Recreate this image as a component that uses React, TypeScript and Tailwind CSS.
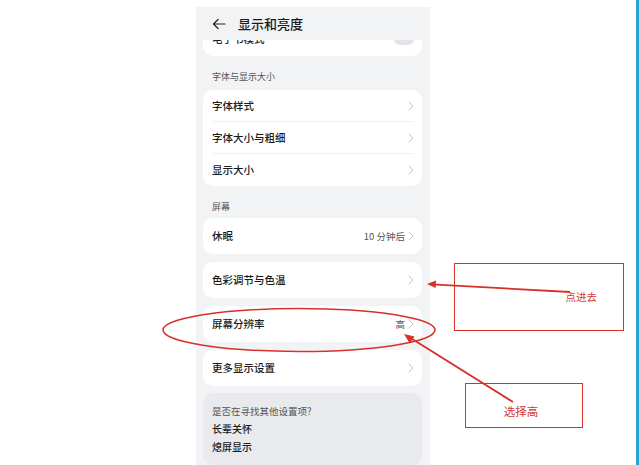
import type { ReactNode } from "react";

const font = { fontFamily: '"Noto Sans CJK SC", "Noto Sans", sans-serif' };

function Chevron() {
  return (
    <svg width="6" height="10" viewBox="0 0 6 10" className="shrink-0">
      <polyline
        points="1,1 5,5 1,9"
        fill="none"
        stroke="#c4c6ca"
        strokeWidth="1"
        strokeLinecap="round"
        strokeLinejoin="round"
      />
    </svg>
  );
}

function Row({ label, value, divider }: { label: string; value?: string; divider?: boolean }) {
  return (
    <div className="relative flex h-[32px] items-center justify-between pl-[9px] pr-[8px]">
      <span className="text-[10.5px] font-medium text-[#1b1b1b]">{label}</span>
      <div className="flex items-center gap-[3px]">
        {value && <span className="text-[9.5px] text-[#555]">{value}</span>}
        <Chevron />
      </div>
      {divider && <div className="absolute bottom-0 left-[9px] right-[8px] h-px bg-[#eef0f2]" />}
    </div>
  );
}

function Card({ children, className = "" }: { children: ReactNode; className?: string }) {
  return <div className={`rounded-[10px] bg-white ${className}`}>{children}</div>;
}

function SingleCard({ label, value, className = "" }: { label: string; value?: string; className?: string }) {
  return (
    <Card className={`flex h-[37px] items-center ${className}`}>
      <div className="flex w-full items-center justify-between pl-[9px] pr-[8px]">
        <span className="text-[10.5px] font-medium text-[#1b1b1b]">{label}</span>
        <div className="flex items-center gap-[3px]">
          {value && <span className="text-[9.5px] text-[#555]">{value}</span>}
          <Chevron />
        </div>
      </div>
    </Card>
  );
}

function SectionLabel({ text, className = "" }: { text: string; className?: string }) {
  return (
    <div className={`flex h-[20px] items-center pl-[9px] text-[9px] text-[#555] ${className}`}>{text}</div>
  );
}

export default function App() {
  return (
    <div className="relative flex h-[465px] w-[639px] overflow-hidden bg-white" style={font}>
      <div className="ml-[196px] mt-[7px] flex w-[234px] flex-col bg-[#f2f3f5] pl-[7px] pr-[8px]">
        {/* header */}
        <div className="relative z-10 -ml-[7px] -mr-[8px] flex h-[34px] items-center gap-[12px] bg-[#f2f3f5] pl-[16px]">
          <svg width="14" height="12" viewBox="0 0 14 12">
            <path d="M13 6H1.5M6 1.5L1.5 6 6 10.5" fill="none" stroke="#222" strokeWidth="1.2" strokeLinecap="round" strokeLinejoin="round" />
          </svg>
          <span className="text-[13px] font-medium text-[#1a1a1a]">显示和亮度</span>
        </div>

        {/* scroll content */}
        <div className="flex flex-col overflow-hidden">
          <Card className="-mt-[19px] flex h-[36px] items-center justify-between pl-[9px] pr-[8px]">
            <span className="text-[10.5px] font-medium text-[#1b1b1b]">电子书模式</span>
            <div className="h-[12px] w-[20px] rounded-full bg-[#e3e4e7]" />
          </Card>

          <SectionLabel text="字体与显示大小" className="mt-[11px] mb-[3px]" />
          <Card>
            <Row label="字体样式" divider />
            <Row label="字体大小与粗细" divider />
            <Row label="显示大小" />
          </Card>

          <SectionLabel text="屏幕" className="mt-[11px] mb-[2px]" />
          <SingleCard label="休眠" value="10 分钟后" />
          <SingleCard label="色彩调节与色温" className="mt-[8px]" />
          <SingleCard label="屏幕分辨率" value="高" className="mt-[8px]" />
          <SingleCard label="更多显示设置" className="mt-[8px]" />

          <div className="mt-[7px] flex flex-col rounded-[10px] bg-[#e9eaed] px-[9px] pt-[9px] pb-[10px]">
            <span className="text-[9.5px] leading-[18px] text-[#555]">是否在寻找其他设置项?</span>
            <span className="text-[10px] font-medium leading-[18px] text-[#1b1b1b]">长辈关怀</span>
            <span className="text-[10px] font-medium leading-[17px] text-[#1b1b1b]">熄屏显示</span>
          </div>
        </div>
      </div>

      <div className="flex-1" />
      <div className="h-full w-[3px] bg-[#22a7da]" />

      {/* annotations */}
      <svg className="pointer-events-none absolute left-0 top-0" width="639" height="465">
        <ellipse cx="299" cy="330" rx="136" ry="21.5" fill="none" stroke="#d8302a" strokeWidth="1.5" />
        <line x1="570" y1="292" x2="432" y2="284.3" stroke="#d8302a" strokeWidth="1.8" />
        <polygon points="427,284 436,280.5 435.6,288" fill="#d8302a" />
        <line x1="513" y1="402" x2="409" y2="337" stroke="#d8302a" strokeWidth="1.8" />
        <polygon points="404,334 414.5,336.5 409.8,343.5" fill="#d8302a" />
      </svg>
      <div className="absolute left-[454px] top-[263px] flex h-[68px] w-[170px] items-center justify-end border-[1.5px] border-[#d8302a] pr-[26px]">
        <span className="text-[10.5px] text-[#d23a33]">点进去</span>
      </div>
      <div className="absolute left-[465px] top-[383px] flex h-[45px] w-[118px] items-center justify-center border-[1.5px] border-[#d8302a] pt-[12px] pr-[6px]">
        <span className="text-[11.5px] text-[#d23a33]">选择高</span>
      </div>
    </div>
  );
}
